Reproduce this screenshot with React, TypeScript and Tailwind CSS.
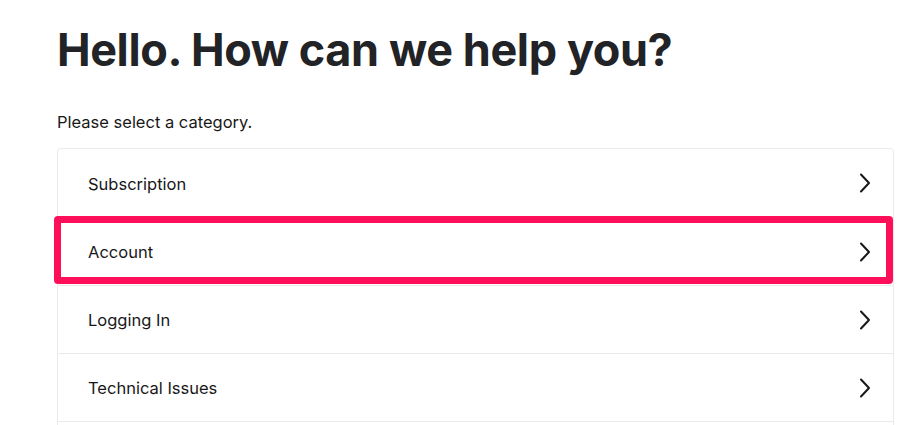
import React from "react";

const Chevron = () => (
  <svg width="12" height="20" viewBox="0 0 12 20" fill="none" className="shrink-0">
    <path d="M2 1.5 L10 10 L2 18.5" stroke="#181818" strokeWidth="2" strokeLinecap="round" strokeLinejoin="round" />
  </svg>
);

const items = ["Subscription", "Account", "Logging In", "Technical Issues", ""];

export default function App() {
  return (
    <div className="w-[915px] h-[425px] overflow-hidden bg-white" style={{ fontFamily: "Inter, 'Noto Sans', sans-serif" }}>
      <div className="pl-[57px] pr-[21px] pt-[22px]">
        <h1 className="text-[45px] leading-[56px] font-bold text-[#222326] tracking-[-0.4px]">Hello. How can we help you?</h1>
        <p className="mt-[32px] text-[16.5px] leading-[24px] text-[#181818]">Please select a category.</p>
        <div className="relative mt-[14px] rounded-[4px] border border-[#ebebeb]">
          {items.map((label, i) => (
            <div
              key={i}
              className={`flex h-[68px] items-center justify-between pl-[30px] pr-[22px] ${i > 0 ? "border-t border-[#ebebeb]" : ""}`}
            >
              {label ? (
                <>
                  <span className="text-[16.5px] text-[#181818] translate-y-[1px]">{label}</span>
                  <Chevron />
                </>
              ) : null}
            </div>
          ))}
          <div className="pointer-events-none absolute left-[-4px] right-[0px] top-[67px] h-[68px] rounded-[4px] border-[7px] border-[#ff0f5a]" />
        </div>
      </div>
    </div>
  );
}
